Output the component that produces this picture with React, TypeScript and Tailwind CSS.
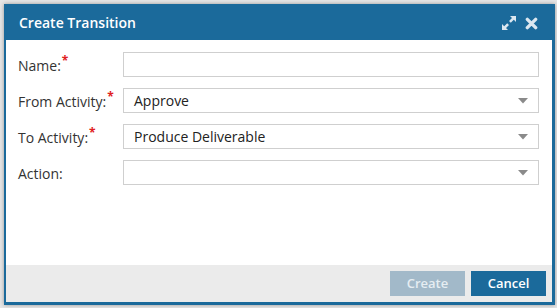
const rows = [
  { label: "Name:", required: true, value: "", select: false },
  { label: "From Activity:", required: true, value: "Approve", select: true },
  { label: "To Activity:", required: true, value: "Produce Deliverable", select: true },
  { label: "Action:", required: false, value: "", select: true },
];

export default function App() {
  return (
    <div className="w-[557px] h-[308px] bg-[#e6e6e6] pt-[4px] pl-[4px] font-['Open_Sans',sans-serif]">
      <div className="w-[551px] h-[301px] flex flex-col border-[#1b6a9b] border-l-2 border-r-[3px] border-b-[3px] bg-white shadow-[0_0_4px_rgba(0,0,0,0.35)]">
        {/* header */}
        <div className="h-[36px] bg-[#1b6a9b] flex items-center pl-[15px] pr-[17px] -ml-[2px] -mr-[3px]">
          <span className="text-white text-[14px] font-semibold">Create Transition</span>
          <div className="ml-auto flex items-center gap-[8px] text-[#dbe7f0] pt-[2px]">
            <svg width="16" height="16" viewBox="0 0 16 16" fill="currentColor">
              <path d="M9 1h6v6l-2.2-2.2-3 3-1.8-1.8 3-3z" />
              <path d="M7 15H1V9l2.2 2.2 3-3 1.8 1.8-3 3z" />
            </svg>
            <svg width="13" height="13" viewBox="0 0 14 14" fill="none" stroke="currentColor" strokeWidth="3.6" strokeLinecap="round">
              <path d="M2.5 2.5l9 9M11.5 2.5l-9 9" />
            </svg>
          </div>
        </div>

        {/* body */}
        <div className="flex-1 pt-[12px] pl-[12px] pr-[12px] flex flex-col gap-[11px]">
          {rows.map((r) => (
            <div key={r.label} className="flex items-center h-[25px]">
              <div className="w-[105px] text-[14px] text-[#333] leading-none pt-[2px]">
                {r.label}
                {r.required && (
                  <span className="text-[#e02020] text-[12px] font-bold relative top-[-6px] ml-[1px]">*</span>
                )}
              </div>
              <div className="w-[416px] h-[25px] border border-[#cfcfcf] flex items-center pl-[10px] pr-[10px]">
                <span className="text-[14px] text-[#222]">{r.value}</span>
                {r.select && (
                  <svg className="ml-auto" width="10" height="6" viewBox="0 0 10 6">
                    <path d="M0 0h10L5 5.5z" fill="#8a8a8a" />
                  </svg>
                )}
              </div>
            </div>
          ))}
        </div>

        {/* footer */}
        <div className="h-[37px] bg-[#ebebeb] flex items-center justify-end gap-[6px] pr-[6px]">
          <button className="w-[75px] h-[25px] bg-[#a2b9c9] text-[#e6edf2] text-[13px] font-semibold">Create</button>
          <button className="w-[75px] h-[25px] bg-[#1b6a9b] text-white text-[13px] font-semibold">Cancel</button>
        </div>
      </div>
    </div>
  );
}
